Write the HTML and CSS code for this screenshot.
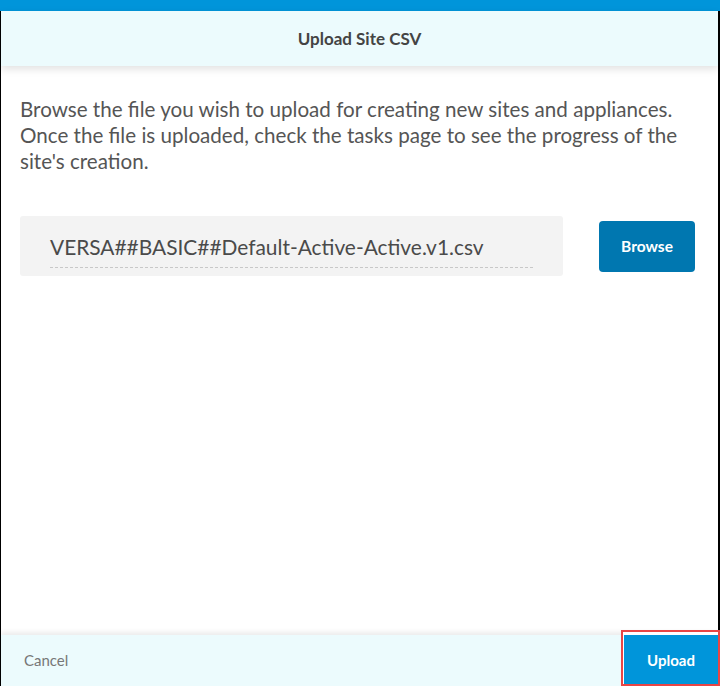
FILE: index.html
```html
<!DOCTYPE html>
<html>
<head>
<meta charset="utf-8">
<link rel="stylesheet" href="styles.css">
</head>
<body>
<div class="modal">
  <div class="topbar"></div>
  <div class="frame">
    <header class="head">Upload Site CSV</header>
    <main class="content">
      <p class="desc">Browse the file you wish to upload for creating new sites and appliances. Once the file is uploaded, check the tasks page to see the progress of the site's creation.</p>
      <div class="filerow">
        <div class="filebox"><span class="filename">VERSA##BASIC##Default-Active-Active.v1.csv</span></div>
        <button class="browse">Browse</button>
      </div>
    </main>
    <footer class="foot">
      <span class="cancel">Cancel</span>
      <div class="upload-wrap"><button class="upload">Upload</button></div>
    </footer>
  </div>
</div>
</body>
</html>
```
FILE: styles.css
```css
* { box-sizing: border-box; }
html, body { margin: 0; padding: 0; background: #fff; }
body { font-family: Lato, "Open Sans", sans-serif; }
.modal { width: 720px; height: 686px; display: flex; flex-direction: column; }
.topbar { height: 11px; background: #0095da; flex: none; }
.frame { flex: 1; display: flex; flex-direction: column; border: 1px solid #000; border-top: none; border-right-width: 2px; border-bottom-width: 1px; }
.head { height: 55px; flex: none; background: #ecfbfd; display: flex; align-items: center; justify-content: center; font-weight: 700; font-size: 17px; color: #444; box-shadow: 0 3px 8px rgba(0,0,0,0.12); position: relative; z-index: 1; }
.content { flex: 1; padding: 30px 19px 0 19px; }
.desc { margin: 0; font-size: 20.6px; line-height: 26px; color: #555; }
.filerow { display: flex; align-items: center; margin-top: 42px; }
.filebox { width: 543px; height: 60px; background: #f3f3f3; border-radius: 3px; padding: 0 30px; display: flex; flex-direction: column; justify-content: flex-end; }
.filename { display: block; font-size: 20.9px; color: #4a4a4a; line-height: 26px; padding-bottom: 7px; border-bottom: 1px dashed #c8c8c8; margin-bottom: 8px; }
.browse { margin-left: 36px; width: 96px; height: 51px; background: #0077b0; color: #fff; border: none; border-radius: 4px; font-family: Lato, sans-serif; font-weight: 700; font-size: 15.5px; }
.foot { height: 51px; flex: none; background: #ecfbfd; display: flex; align-items: center; justify-content: space-between; box-shadow: 0 -3px 5px rgba(0,0,0,0.08); position: relative; margin-right: -2px; margin-bottom: -1px; }
.cancel { padding-left: 23px; padding-bottom: 2px; font-size: 15px; color: #777; }
.upload-wrap { align-self: stretch; border: 2px solid #e84545; margin-top: -5px; padding: 3px 0 0 1px; background: #fff; width: 99px; }
.upload { width: 100%; height: 100%; background: #0095da; color: #fff; border: none; font-family: Lato, sans-serif; font-weight: 700; font-size: 15px; display: block; }
```
